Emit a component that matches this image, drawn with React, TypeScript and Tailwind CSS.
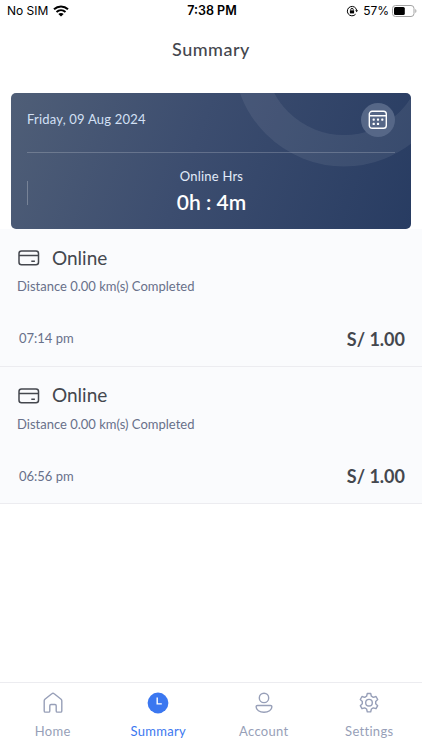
import React from "react";

const trips = [
  { id: 1, type: "Online", distance: "Distance 0.00 km(s) Completed", time: "07:14 pm", amount: "S/ 1.00" },
  { id: 2, type: "Online", distance: "Distance 0.00 km(s) Completed", time: "06:56 pm", amount: "S/ 1.00" },
];

function HomeIcon() {
  return (
    <svg width="22" height="22" viewBox="0 0 22 22" fill="none" stroke="currentColor" strokeWidth="1.4" strokeLinejoin="round">
      <path d="M2.2 8.8c0-.6.3-1.1.7-1.5l6.9-5.6c.7-.6 1.7-.6 2.4 0l6.9 5.6c.4.4.7.9.7 1.5v10.1c0 .7-.5 1.2-1.2 1.2h-3.2c-.7 0-1.2-.5-1.2-1.2v-5.2c0-.7-.5-1.2-1.2-1.2H9c-.7 0-1.2.5-1.2 1.2v5.2c0 .7-.5 1.2-1.2 1.2H3.4c-.7 0-1.2-.5-1.2-1.2z" />
    </svg>
  );
}

function SummaryIcon() {
  return (
    <svg width="22" height="22" viewBox="0 0 22 22" fill="none">
      <circle cx="11" cy="11" r="10.4" fill="currentColor" />
      <path d="M10.2 5.4v6.5h4.6" stroke="#fff" strokeWidth="1.4" />
    </svg>
  );
}

function AccountIcon() {
  return (
    <svg width="22" height="22" viewBox="0 0 22 22" fill="none" stroke="currentColor" strokeWidth="1.4">
      <circle cx="11" cy="5.9" r="4.7" />
      <path d="M4.5 13.5h13c.8 0 1.4.6 1.4 1.3 0 3.100-3.500 5.500-7.900 5.500s-7.900-2.400-7.900-5.500c0-.7.600-1.300 1.400-1.300z" />
    </svg>
  );
}

function SettingsIcon() {
  return (
    <svg width="22" height="22" viewBox="0 0 22 22" fill="none" stroke="currentColor" strokeWidth="1.4" strokeLinejoin="round">
      <path d="M9.300 1.500h3.400l.7 2.700 1.900 1.100 2.700-.8 1.700 3-2 1.900v2.400l2 1.900-1.700 3-2.700-.8-1.900 1.100-.7 2.900H9.300L8.600 17l-1.900-1.100-2.700.8-1.700-3 2-1.900V9.400l-2-1.900 1.700-3 2.700.8 1.900-1.100z" />
      <circle cx="11" cy="10.700" r="3.300" />
    </svg>
  );
}

function CardIcon() {
  return (
    <svg width="22" height="16" viewBox="0 0 22 16" fill="none" stroke="#44474e" strokeWidth="1.500">
      <rect x="1" y="1" width="19.500" height="13.800" rx="2.500" />
      <path d="M1 5.600h19.500M13.300 11.300h3.600" />
    </svg>
  );
}

function CalendarIcon() {
  return (
    <svg width="20" height="20" viewBox="0 0 20 20" fill="none" stroke="#fff" strokeWidth="1.400">
      <rect x="1.300" y="1.300" width="17" height="17" rx="2.800" />
      <path d="M1.300 5.700h17" />
      <g fill="#fff" stroke="none">
        <rect x="4.600" y="8.500" width="2.200" height="2.200" rx=".6" />
        <rect x="8.900" y="8.500" width="2.200" height="2.200" rx=".6" />
        <rect x="13.200" y="8.500" width="2.200" height="2.200" rx=".6" />
        <rect x="4.600" y="12.800" width="2.200" height="2.200" rx=".6" />
        <rect x="8.900" y="12.800" width="2.200" height="2.200" rx=".6" />
      </g>
    </svg>
  );
}

function StatusBar() {
  return (
    <header className="grid h-[22px] grid-cols-3 items-center pl-[7px] pr-[5px] font-['Inter',sans-serif] text-[12px] leading-none text-black">
      <div className="flex items-center gap-[5px]">
        <span className="whitespace-nowrap">No SIM</span>
        <svg width="16" height="12" viewBox="0 0 16 12" fill="none" stroke="#000" strokeWidth="2">
          <path d="M1 4.300C5 .5 11 .5 15 4.300M3.500 7c2.600-2.300 6.400-2.300 9 0" />
          <path d="M8 11.500 5.300 8.900c1.500-1.200 3.900-1.200 5.400 0z" fill="#000" stroke="none" />
        </svg>
      </div>
      <span className="text-center text-[12.500px] font-semibold">7:38 PM</span>
      <div className="flex items-center justify-end">
        <svg className="mr-[5px]" width="12" height="12" viewBox="0 0 12 12" fill="none" stroke="#000" strokeWidth="1">
          <path d="M9.600 9.200A4.700 4.700 0 1 1 10.700 5.500" />
          <path d="M9.200 5.200h2.800l-1.400 2z" fill="#000" stroke="none" />
          <rect x="3.900" y="5.400" width="4.200" height="3" fill="#000" stroke="none" />
          <path d="M4.800 5.500v-1c0-1.600 2.400-1.600 2.400 0v1" />
        </svg>
        <span className="mr-[3px]">57%</span>
        <svg width="25" height="12" viewBox="0 0 25 12" fill="none">
          <rect x=".5" y=".5" width="21.500" height="11" rx="3" stroke="#a3a3a3" />
          <rect x="2" y="2" width="10.800" height="8" rx="1.500" fill="#000" />
          <path d="M23.300 4v4c1.500-.6 1.500-3.400 0-4z" fill="#a3a3a3" />
        </svg>
      </div>
    </header>
  );
}

const navItems = [
  { id: "home", label: "Home", icon: HomeIcon },
  { id: "summary", label: "Summary", icon: SummaryIcon },
  { id: "account", label: "Account", icon: AccountIcon },
  { id: "settings", label: "Settings", icon: SettingsIcon },
];

export default function App() {
  const activeTab = "summary";

  return (
    <div className="flex h-[750px] w-[422px] flex-col overflow-hidden bg-white font-['Lato',sans-serif]">
      <StatusBar />

      <h1 className="flex h-[54px] items-center justify-center text-[18px] font-medium tracking-[0.500px] text-[#44474e]">
        Summary
      </h1>

      {/* Daily overview */}
      <section className="relative mx-[11px] mt-[17px] h-[136px] shrink-0 overflow-hidden rounded-[5px] bg-linear-[110deg,#4f5e77_0%,#3c4d6f_45%,#283c62_100%] px-4 text-white">
        <svg className="absolute inset-0" width="400" height="136" viewBox="0 0 400 136" fill="none">
          <circle cx="333" cy="-37" r="94.700" stroke="#fff" strokeOpacity=".07" strokeWidth="31.500" />
        </svg>
        <div className="relative flex h-[60px] items-center justify-between border-b border-white/20 pb-[5px]">
          <span className="text-[13px] tracking-[0.200px] text-[#d3e0f5]">Friday, 09 Aug 2024</span>
          <button className="flex size-[34px] items-center justify-center rounded-full bg-[#566787]">
            <CalendarIcon />
          </button>
        </div>
        <div className="relative flex h-[76px] items-center">
          <div className="mt-1 h-6 w-px bg-white/25" />
          <div className="flex flex-1 flex-col items-center">
            <span className="text-[13px] leading-[18px] tracking-[0.200px] text-[#e3ecfa]">Online Hrs</span>
            <span className="mt-[3px] text-[21px] leading-[28px] font-semibold">0h : 4m</span>
          </div>
        </div>
      </section>

      <main className="flex-1">
        {trips.map((trip) => (
          <article key={trip.id} className="flex h-[137.500px] flex-col border-b border-[#ececf0] bg-[#fafbfd] pr-[17px] pl-[17px]">
            <div className="mt-[15px] flex h-7 items-center gap-3 pl-px">
              <CardIcon />
              <span className="text-[19px] text-[#44474e]">{trip.type}</span>
            </div>
            <p className="mt-1 text-[13px] leading-5 text-[#68708a]">{trip.distance}</p>
            <div className="mt-[29px] flex h-7 items-center justify-between pl-[2px]">
              <span className="text-[13px] text-[#68708a]">{trip.time}</span>
              <span className="text-[18px] font-bold text-[#44474e]">{trip.amount}</span>
            </div>
          </article>
        ))}
      </main>

      <nav className="grid h-[68px] shrink-0 grid-cols-4 border-t border-[#ececf0]">
        {navItems.map((item) => {
          const Icon = item.icon;
          return (
            <button
              key={item.id}
              className={`flex flex-col items-center pt-[9px] ${activeTab === item.id ? "text-[#3b77f0]" : "text-[#979fb8]"}`}
            >
              <Icon />
              <span className="mt-2 text-[13px] leading-[18px] tracking-[0.300px]">{item.label}</span>
            </button>
          );
        })}
      </nav>
    </div>
  );
}
